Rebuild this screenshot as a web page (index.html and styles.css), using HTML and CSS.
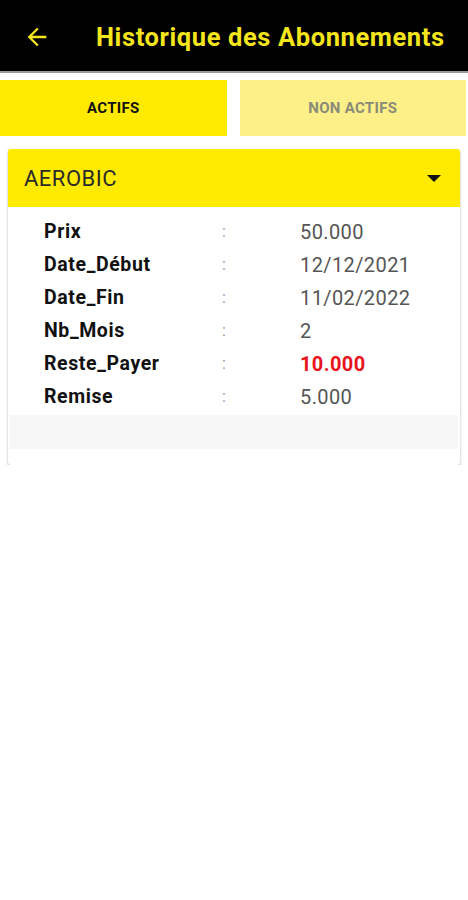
FILE: index.html
```html
<!DOCTYPE html>
<html lang="fr">
    <head>
        <meta charset="UTF-8" />
        <meta name="viewport" content="width=device-width, initial-scale=1.0" />
        <title>Historique des Abonnements</title>
        <link rel="stylesheet" href="styles.css">
    </head>
    <body>
        <header class="topbar">
            <svg class="back" width="28" height="28" viewBox="0 0 24 24">
                <path d="M20 11H7.83l5.59-5.59L12 4l-8 8 8 8 1.41-1.41L7.83 13H20v-2z" fill="#f5e51c" />
            </svg>
            <h1>Historique des Abonnements</h1>
        </header>

        <nav class="tabs">
            <button class="tab active">ACTIFS</button>
            <button class="tab">NON ACTIFS</button>
        </nav>

        <section class="card">
            <div class="card-head">
                <span>AEROBIC</span>
                <span class="caret"></span>
            </div>
            <div class="rows">
                <div class="row"><span class="label">Prix</span><span class="sep">:</span><span class="value">50.000</span></div>
                <div class="row"><span class="label">Date_Début</span><span class="sep">:</span><span class="value">12/12/2021</span></div>
                <div class="row"><span class="label">Date_Fin</span><span class="sep">:</span><span class="value">11/02/2022</span></div>
                <div class="row"><span class="label">Nb_Mois</span><span class="sep">:</span><span class="value">2</span></div>
                <div class="row"><span class="label">Reste_Payer</span><span class="sep">:</span><span class="value due">10.000</span></div>
                <div class="row"><span class="label">Remise</span><span class="sep">:</span><span class="value">5.000</span></div>
            </div>
            <div class="band"></div>
        </section>
    </body>
</html>
```

FILE: styles.css
```css
body {
    margin: 0;
    font-family: Roboto, "Liberation Sans", Arial, sans-serif;
    background: #fff;
}

.topbar {
    height: 71px;
    background: #000;
    border-bottom: 2px solid #9a9a9a;
    display: flex;
    align-items: center;
    padding-left: 23px;
}

.back {
    width: 28px;
    height: 28px;
    margin-top: 2px;
}

.topbar h1 {
    margin: 2px 0 0 45px;
    color: #f5e51c;
    font-size: 25.5px;
    font-weight: 700;
    letter-spacing: 0.6px;
}

.tabs {
    display: flex;
    gap: 13px;
    padding: 7px 2px 0 0;
}

.tab {
    flex: 1;
    height: 56px;
    border: none;
    font-family: inherit;
    font-size: 15px;
    font-weight: 700;
    letter-spacing: 0.3px;
    background: #fdf088;
    color: #8a8a7a;
    padding-top: 0;
}

.tab.active {
    background: #ffea00;
    color: #111;
}

.card {
    margin: 13px 8px 0 8px;
    border-radius: 3px;
    box-shadow: 0 2px 3px rgba(0, 0, 0, 0.25), 0 0 1px rgba(0, 0, 0, 0.15);
    padding-bottom: 16px;
    overflow: hidden;
}

.card-head {
    height: 58px;
    background: #ffea00;
    display: flex;
    align-items: center;
    justify-content: space-between;
    padding: 0 19px 0 16px;
    font-size: 22px;
    letter-spacing: 0.5px;
    color: #2a2a2a;
}

.caret {
    width: 0;
    height: 0;
    border-left: 7px solid transparent;
    border-right: 7px solid transparent;
    border-top: 7px solid #111;
}

.rows {
    padding: 8px 0 0 36px;
}

.row {
    display: flex;
    align-items: center;
    height: 33px;
}

.label {
    width: 178px;
    font-size: 19.5px;
    font-weight: 700;
    letter-spacing: 0.6px;
    color: #111;
}

.sep {
    width: 78px;
    color: #999;
    font-size: 16px;
}

.value {
    font-size: 20px;
    letter-spacing: 0.4px;
    color: #555;
}

.value.due {
    color: #e8141c;
    font-weight: 700;
}

.band {
    height: 34px;
    background: #f6f6f6;
    margin: 2px 2px 0 2px;
}
```
